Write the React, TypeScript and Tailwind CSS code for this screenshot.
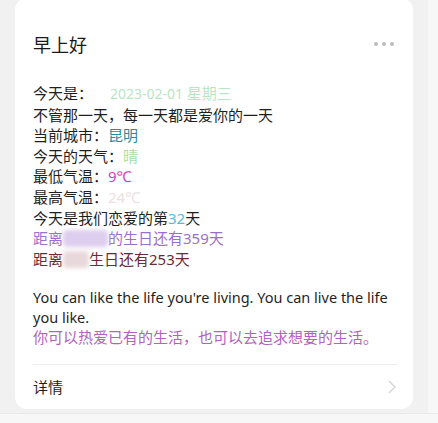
const cjk = { fontFamily: '"Noto Sans CJK SC", "Noto Sans", sans-serif' };
const latin = { fontFamily: '"Noto Sans", "Noto Sans CJK SC", sans-serif' };

const Blur = ({ w, color }: { w: number; color: string }) => (
  <span
    className={`inline-block h-[17px] align-[-3px] blur-[2px] rounded-sm ${color}`}
    style={{ width: w }}
  />
);

export default function App() {
  return (
    <div className="w-[438px] h-[423px] flex flex-col bg-[#f7f7f7]" style={cjk}>
      <div className="flex h-[414px] border-b border-[#e9e9e9]">
        <div className="w-[428px] bg-[#f1f1f1] px-[15px]">
          <div className="h-[411px] -mt-[2px] bg-white rounded-[12px] pl-[18px] pr-[15px] flex flex-col">
            <div className="flex items-center justify-between pt-[34px]">
              <h1 className="text-[18px] leading-[24px] text-[#1a1a1a]">早上好</h1>
              <div className="flex gap-[4px] mr-[4px]">
                <span className="w-[4px] h-[4px] rounded-full bg-[#bcbcbc]" />
                <span className="w-[4px] h-[4px] rounded-full bg-[#bcbcbc]" />
                <span className="w-[4px] h-[4px] rounded-full bg-[#bcbcbc]" />
              </div>
            </div>

            <div className="mt-[27px] text-[15px] leading-[20.6px] text-[#1f1f1f]">
              <p>
                今天是：
                <span className="ml-[17px] text-[14px] text-[#b8e6c4]" style={latin}>
                  2023-02-01{" "}
                </span>
                <span className="text-[#b8e6c4]">星期三</span>
              </p>
              <p>不管那一天，每一天都是爱你的一天</p>
              <p>
                当前城市：<span className="text-[#2a8a9c]">昆明</span>
              </p>
              <p>
                今天的天气：<span className="text-[#a8e29c]">晴</span>
              </p>
              <p>
                最低气温：<span className="text-[#e03ab8]" style={latin}>9℃</span>
              </p>
              <p>
                最高气温：<span className="text-[#eadfe2]" style={latin}>24℃</span>
              </p>
              <p>
                今天是我们恋爱的第<span className="text-[#55bcd8]" style={latin}>32</span>天
              </p>
              <p className="text-[#9b70cc]">
                距离<Blur w={45} color="bg-[#ddcdee]" />的生日还有<span style={latin}>359</span>天
              </p>
              <p className="text-[#6b2a35]">
                距离<Blur w={26} color="bg-[#e8d8dc]" />生日还有<span style={latin}>253</span>天
              </p>
            </div>

            <div className="mt-[19px] text-[15px] leading-[19.5px]">
              <p className="text-[14.5px] text-[#1f1f1f]" style={latin}>
                You can like the life you're living. You can live the life you like.
              </p>
              <p className="text-[#b45fc2]">你可以热爱已有的生活，也可以去追求想要的生活。</p>
            </div>

            <div className="mt-[17px] border-t border-[#eeeeee] flex items-center justify-between h-[47px]">
              <span className="text-[15px] text-[#1f1f1f]">详情</span>
              <svg width="10" height="16" viewBox="0 0 10 16" className="mr-[1px]">
                <polyline points="2,2 8,8 2,14" fill="none" stroke="#d4d4d4" strokeWidth="1.4" />
              </svg>
            </div>
          </div>
        </div>
        <div className="w-[10px] bg-[#f7f7f7]" />
      </div>
    </div>
  );
}
